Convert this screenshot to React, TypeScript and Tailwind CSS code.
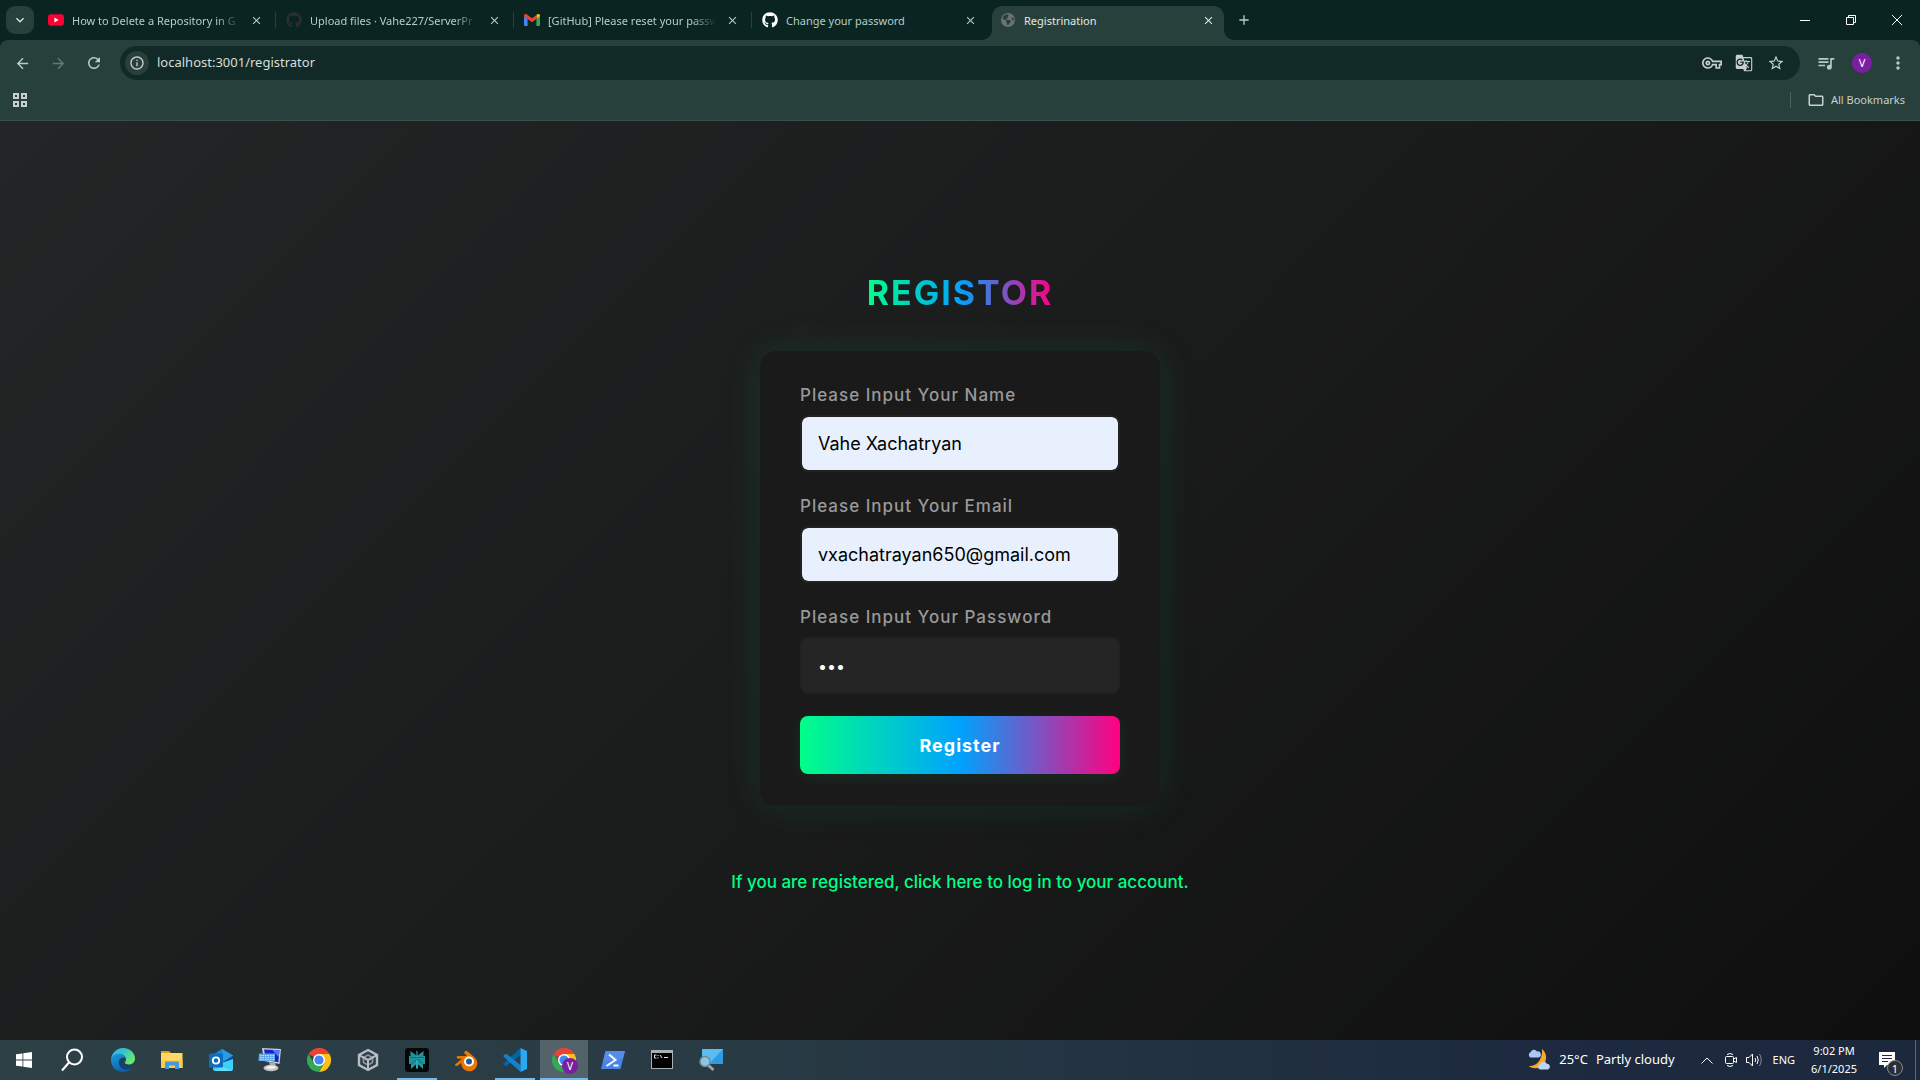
import React, { useState } from "react";
import { FaGithub } from "react-icons/fa";
import { FaEarthAmericas } from "react-icons/fa6";
import {
  MdArrowBack,
  MdArrowForward,
  MdClose,
  MdAdd,
  MdExpandMore,
  MdGTranslate,
  MdMoreVert,
  MdOutlineFolder,
  MdOutlineVpnKey,
  MdQueueMusic,
  MdRefresh,
  MdStarBorder,
  MdOutlineInfo,
} from "react-icons/md";

function YoutubeIcon() {
  return (
    <svg viewBox="0 0 16 16" className="size-4">
      <rect x="0" y="2.3" width="16" height="11.4" rx="3" fill="#ff0033" />
      <path d="M6.4 5.6v4.8L10.6 8z" fill="#fff" />
    </svg>
  );
}

function GmailIcon() {
  return (
    <svg viewBox="0 0 16 12" className="h-3 w-4">
      <path d="M0 1.8V11a1 1 0 0 0 1 1h2.6V4.6z" fill="#4285f4" />
      <path d="M16 1.8V11a1 1 0 0 1-1 1h-2.6V4.6z" fill="#34a853" />
      <path d="M12.4 1v3.8L16 2.2V1.6C16 .2 14.400-.5 13.300.3z" fill="#fbbc04" />
      <path d="M0 1.600v.6l3.600 2.700L8 8.200l4.400-3.300V1L8 4.300 2.700.3C1.600-.5 0 .2 0 1.600z" fill="#ea4335" />
    </svg>
  );
}

const tabs = [
  { title: "How to Delete a Repository in G", icon: <YoutubeIcon /> },
  { title: "Upload files · Vahe227/ServerPr", icon: <FaGithub className="size-4 text-[#2a2d31]" /> },
  { title: "[GitHub] Please reset your passw", icon: <GmailIcon /> },
  { title: "Change your password", icon: <FaGithub className="size-4 text-white" /> },
  { title: "Registrination", icon: <FaEarthAmericas className="size-[14px] text-[#6c7174]" />, active: true },
];

function Tab({ title, icon, active, divider }: { title: string; icon: React.ReactNode; active?: boolean; divider?: boolean }) {
  return (
    <div className="relative flex h-10 w-[238px] shrink items-end pl-[2px] pr-1">
      {active && (
        <>
          <svg viewBox="0 0 10 10" className="absolute bottom-0 -left-2 size-[10px] fill-[#28403b]"><path d="M10 0v10H0A10 10 0 0 0 10 0z" /></svg>
          <svg viewBox="0 0 10 10" className="absolute -right-[6px] bottom-0 size-[10px] fill-[#28403b]"><path d="M0 0v10h10A10 10 0 0 1 0 0z" /></svg>
        </>
      )}
      <div className={active ? "flex h-[34px] w-full items-center rounded-t-[10px] bg-[#28403b] pb-[6px] pl-2 pr-2" : "flex h-[34px] w-full items-center pb-[6px] pl-2 pr-2"}>
        <span className="flex size-4 shrink-0 items-center justify-center">{icon}</span>
        <span className={active ? "ml-2 min-w-0 flex-1 whitespace-nowrap pt-[2px] text-[11px] text-[#e3e8e6]" : divider ? "ml-2 min-w-0 flex-1 whitespace-nowrap pt-[2px] text-[11px] text-[#b4cec6] [mask-image:linear-gradient(to_right,black_86%,transparent)]" : "ml-2 min-w-0 flex-1 whitespace-nowrap pt-[2px] text-[11px] text-[#b4cec6]"}>{title}</span>
        <button aria-label={"Close " + title} className={active ? "ml-2 flex size-4 items-center justify-center text-[#e3e8e6]" : "ml-2 flex size-4 items-center justify-center text-[#b4cec6]"}>
          <MdClose className="size-[13px]" />
        </button>
      </div>
      {divider && <span className="absolute right-0 top-3 h-4 w-px bg-[#28403b]" />}
    </div>
  );
}

function AppsGridIcon() {
  return (
    <svg viewBox="0 0 16 16" className="size-4 fill-none stroke-current stroke-2"><path d="M2 2h4v4H2zM10 2h4v4h-4zM2 10h4v4H2zM10 10h4v4h-4z" /></svg>
  );
}

function BrowserChrome() {
  return (
    <header className="shrink-0 bg-[#0a2421]">
      <div className="flex h-10">
        <button aria-label="Search tabs" className="mx-[6px] mt-[6px] mr-1 flex size-7 shrink-0 items-center justify-center rounded-[9px] bg-[#28403b] text-[#d5e3de]">
          <MdExpandMore className="size-4" />
        </button>
        <nav aria-label="Tabs" className="flex min-w-0">
          {tabs.map((t, i) => (
            <Tab key={t.title} {...t} divider={i < 3} />
          ))}
        </nav>
        <button aria-label="New tab" className="ml-[2px] flex h-10 w-7 items-center justify-center text-[#b4cec6]">
          <MdAdd className="size-4" />
        </button>
        <div className="ml-auto flex text-white">
          <button aria-label="Minimize" className="flex h-10 w-[46px] items-center justify-center"><span className="h-px w-[10px] bg-white" /></button>
          <button aria-label="Restore" className="flex h-10 w-[46px] items-center justify-center">
            <svg viewBox="0 0 10 10" className="size-[10px] fill-none stroke-white"><path d="M.5 2.500h7v7h-7zM2.500 2.500v-2h7v7h-2" /></svg>
          </button>
          <button aria-label="Close window" className="flex h-10 w-[46px] items-center justify-center">
            <svg viewBox="0 0 10 10" className="size-[10px] fill-none stroke-white"><path d="M0 0l10 10M10 0L0 10" /></svg>
          </button>
        </div>
      </div>
      <div className="rounded-t-lg border-b border-[#3c4f4a] bg-[#28403b]">
        <div className="flex h-[46px] items-center pl-1 pr-1">
          <button aria-label="Back" className="flex size-9 items-center justify-center text-[#b4cec6]"><MdArrowBack className="size-[17px]" /></button>
          <button aria-label="Forward" className="flex size-9 items-center justify-center text-[#637a73]"><MdArrowForward className="size-[17px]" /></button>
          <button aria-label="Reload" className="flex size-9 items-center justify-center text-[#b4cec6]"><MdRefresh className="size-[18px]" /></button>
          <div className="ml-2 flex h-[34px] min-w-0 flex-1 items-center rounded-full bg-[#112a27] pl-[5px] pr-2 text-[#c7cfcc]">
            <button aria-label="View site information" className="flex size-6 shrink-0 items-center justify-center rounded-full bg-[#28403b]"><MdOutlineInfo className="size-4" /></button>
            <input aria-label="Address" defaultValue="localhost:3001/registrator" className="ml-2 min-w-0 flex-1 bg-transparent text-[13px] text-[#d5dfdc] outline-none" />
            <button aria-label="Passwords" className="flex size-8 items-center justify-center"><MdOutlineVpnKey className="size-5" /></button>
            <button aria-label="Translate" className="flex size-8 items-center justify-center"><MdGTranslate className="size-[18px]" /></button>
            <button aria-label="Bookmark this tab" className="flex size-8 items-center justify-center"><MdStarBorder className="size-[18px]" /></button>
          </div>
          <button aria-label="Media controls" className="ml-2 flex size-9 items-center justify-center text-[#b4cec6]"><MdQueueMusic className="size-5" /></button>
          <button aria-label="Profile" className="flex size-9 items-center justify-center"><span className="flex size-5 items-center justify-center rounded-full bg-[#7b1fa2] text-[11px] text-white">V</span></button>
          <button aria-label="Menu" className="flex size-9 items-center justify-center text-[#b4cec6]"><MdMoreVert className="size-5" /></button>
        </div>
        <div className="flex h-[34px] items-center pb-[6px] pl-3 pr-[15px] text-[#c7cfcc]">
          <button aria-label="Apps"><AppsGridIcon /></button>
          <span className="ml-auto h-4 w-px bg-[#48635b]" />
          <button className="ml-4 flex items-center gap-[6px] text-[11px]"><MdOutlineFolder className="size-[18px]" />All Bookmarks</button>
        </div>
      </div>
    </header>
  );
}

function Field({ id, label, type, value, filled }: { id: string; label: string; type: string; value: string; filled?: boolean }) {
  const [text, setText] = useState(value);
  return (
    <div className="mb-[22px]">
      <label htmlFor={id} className="mb-2 block text-[17px] font-medium leading-6 tracking-[1px] text-[#999]">{label}</label>
      <input
        id={id}
        type={type}
        value={text}
        onChange={(e) => setText(e.target.value)}
        className={filled
          ? "block h-[57px] w-full rounded-lg border-2 border-[#222] bg-[#e8f0fe] bg-clip-padding px-4 text-[18px] text-black outline-none"
          : "block h-[57px] w-full rounded-lg border-2 border-[#222] bg-[#252525] px-4 text-[16px] text-white outline-none"}
      />
    </div>
  );
}

function RegisterPage() {
  return (
    <main className="flex flex-1 flex-col items-center justify-center bg-[linear-gradient(135deg,#232526,#1a1b1b_50%,#0f0f0f)] font-['Inter',sans-serif]">
      <h1 className="bg-[linear-gradient(90deg,#00ff88,#00a2ff,#ff0080)] bg-clip-text text-[34px] font-bold leading-[52px] tracking-[2px] text-transparent">REGISTOR</h1>
      <form onSubmit={(e) => e.preventDefault()} className="mt-8 w-full max-w-[400px] rounded-2xl bg-[#1a1a1a] px-10 py-8 shadow-[0_0_40px_rgba(0,255,136,0.1)]">
        <Field id="name" label="Please Input Your Name" type="text" value="Vahe Xachatryan" filled />
        <Field id="email" label="Please Input Your Email" type="email" value="vxachatrayan650@gmail.com" filled />
        <Field id="password" label="Please Input Your Password" type="password" value="123" />
        <button type="submit" className="h-[58px] w-full rounded-lg bg-[linear-gradient(90deg,#00ff88,#00a2ff,#ff0080)] text-[18px] font-bold tracking-[1px] text-white shadow-[0_4px_15px_rgba(0,255,136,0.08)]">Register</button>
      </form>
      <a href="#login" className="mt-16 text-[17px] font-medium leading-6 text-[#00ff88]">If you are registered, click here to log in to your account.</a>
    </main>
  );
}

function ChromeLogo() {
  return (
    <svg viewBox="0 0 24 24" className="size-6">
      <path d="M12 12L1.600 6A12 12 0 0 1 22.400 6z" fill="#ea4335" />
      <path d="M12 0a12 12 0 0 1 10.400 6H12z" fill="#ea4335" />
      <path d="M22.400 6A12 12 0 0 1 12 24l5.200-9L12 6z" fill="#fbc116" />
      <path d="M1.600 6A12 12 0 0 0 12 24l5.200-9-10.400 0z" fill="#34a853" />
      <circle cx="12" cy="12" r="6" fill="#fff" />
      <circle cx="12" cy="12" r="4.600" fill="#4285f4" />
    </svg>
  );
}

function WindowsLogo() {
  return (
    <svg viewBox="0 0 16 16" className="size-4 fill-white"><path d="M0 2.300l6.500-.9v6.200H0zM7.300 1.300L16 0v7.600H7.300zM0 8.400h6.500v6.200L0 13.700zM7.300 8.400H16V16l-8.700-1.300z" /></svg>
  );
}

function SearchGlyph() {
  return (
    <svg viewBox="0 0 24 24" className="size-6 fill-none stroke-white stroke-2"><circle cx="14.500" cy="9" r="7.500" /><path d="M9 14.500L2 22.500" /></svg>
  );
}

function EdgeLogo() {
  return (
    <svg viewBox="0 0 24 24" className="size-6">
      <defs>
        <linearGradient id="edgeTop" x1="0" y1="0" x2="1" y2="0.500"><stop offset="0" stopColor="#2bb4ef" /><stop offset=".5" stopColor="#35c1d0" /><stop offset="1" stopColor="#66eb6e" /></linearGradient>
        <linearGradient id="edgeLow" x1="0" y1="0" x2="0.600" y2="1"><stop offset="0" stopColor="#1b9de2" /><stop offset="1" stopColor="#0c59a4" /></linearGradient>
      </defs>
      <path d="M0 12C.4 5 5.400 0 12 0c7.500 0 12 5.300 12 10.500 0 3.800-2.800 6-6 6-3 0-4.300-1-4.300-1.700 0-.6 1.300-1.200 1.300-3.300C15 8.500 12 6 8 6 3.500 6 .8 9 0 12z" fill="url(#edgeTop)" />
      <path d="M0 12C.8 8 4 5.800 8 5.800c3.500 0 6.500 1.900 7 4.700-1.200-1.300-5-1.500-6.500 1.500-2 4 1.500 9.500 7 9.500 3 0 5-1 6.500-2.500C20 22 16.400 24 12 24 5 24 0 18.500 0 12z" fill="url(#edgeLow)" />
      <path d="M8.500 12c-2 4 1.500 9 7 9 2.500 0 4.700-.8 6.500-2.200 0 0 .2-1-.6-.8C16 20 10.500 17 11 11.500 11 10 10.500 9.700 8.500 12z" fill="#123f80" />
    </svg>
  );
}

function ExplorerIcon() {
  return (
    <svg viewBox="0 0 24 24" className="size-6">
      <path d="M1 3h8l2 2H1z" fill="#e39a10" />
      <path d="M1 5h21.500v15H1z" fill="#fdd663" /><path d="M1 12h21.500v8H1z" fill="#fbc94b" />
      <path d="M5 21v-6.500a1 1 0 0 1 1-1h12a1 1 0 0 1 1 1V21h-4v-3.500H9V21z" fill="#3f9bdc" />
    </svg>
  );
}

function OutlookIcon() {
  return (
    <svg viewBox="0 0 24 24" className="size-6">
      <path d="M4 6.500L13 1l11 6.500V12H4z" fill="#1b86dc" />
      <path d="M24 7.500V13L13 19 9 14z" fill="#0f4a8e" />
      <path d="M13 1l11 6.500L14 14z" fill="#2a9be9" />
      <path d="M4 18l20-7v10a2 2 0 0 1-2 2H6a2 2 0 0 1-2-2z" fill="#3fd0f8" />
      <path d="M12 18.500L24 23H6z" fill="#62dffb" />
      <rect y="5.500" width="14" height="14" rx="1.200" fill="#0f6cbd" />
      <circle cx="7" cy="12.500" r="3.200" fill="none" stroke="#fff" strokeWidth="1.800" />
    </svg>
  );
}

function KeyboardPcIcon() {
  return (
    <svg viewBox="0 0 24 24" className="size-6">
      <path d="M4 0l19 1-1.500 15L6 13z" fill="#c9d0d6" /><path d="M6 1.500l15.500.7-1.200 12L8 12z" fill="#1522c4" /><path d="M14 1.800l7.500.4-.8 7z" fill="#5578ee" />
      <path d="M11 14l6 1 1 3-6 0z" fill="#a9adb1" /><ellipse cx="13" cy="20" rx="7.500" ry="3.300" fill="#c4c4c2" /><ellipse cx="13" cy="19.300" rx="5" ry="1.600" fill="#f0f0ec" />
      <path d="M1 5.500h16v7.500H.5z" fill="#5fa5e8" /><path d="M2 7.500h14M2 9.500h14M2 11.500h14" stroke="#d8eeff" strokeWidth=".8" strokeDasharray="1.500 1" />
    </svg>
  );
}

function UnityHubIcon() {
  return (
    <svg viewBox="0 0 24 24" className="size-6 fill-none stroke-[#b9bcc6]">
      <path d="M12 2L21 7v10l-9 5-9-5V7z" strokeWidth="2.400" />
      <path d="M12 7l4.500 2.500v5L12 17l-4.500-2.500v-5z" strokeWidth="1.800" stroke="#8d929e" />
      <path d="M12 12v10M12 12L3.500 7.300M12 12l8.500-4.700" strokeWidth="2" />
    </svg>
  );
}

function PerplexityIcon() {
  return (
    <svg viewBox="0 0 24 24" className="size-6">
      <rect width="24" height="24" rx="3" fill="#050808" />
      <path d="M12 8L5.500 3v5H4v8h2v5l5-4.500V20h2v-3.500l5 4.500v-5h2V8h-1.500V3z" fill="#20939c" />
      <path d="M11.500 3h1v18h-1z" fill="#35c3cc" />
      <path d="M12 11l-6 5M12 11l6 5M5 9.500h14" stroke="#107078" fill="none" strokeWidth="1" />
    </svg>
  );
}

function BlenderIcon() {
  return (
    <svg viewBox="0 0 24 24" className="size-6">
      <path d="M11 3.200c.9-.7 2-.2 2.700.4l7 5.800A8 8 0 1 1 7.300 14.800L3.500 17.700c-1.700 1.200-3.300-.5-1.900-1.800L8 10.700H4c-1.900 0-1.700-2.600.1-2.600h9L10.900 6c-1-.8-.8-2.100.1-2.800z" fill="#ea7600" />
      <circle cx="15" cy="13.500" r="5" fill="#fff" /><circle cx="15" cy="13.500" r="3" fill="#235899" />
    </svg>
  );
}

function VsCodeIcon() {
  return (
    <svg viewBox="0 0 24 24" className="size-6">
      <path d="M17.500 0v7L3 18.500 0 16z" fill="#0065a9" /><path d="M17.500 24v-7L3 5.500 0 8z" fill="#1382cd" />
      <path d="M17.500 0L24 3v18l-6.500 3z" fill="#29a9f2" />
    </svg>
  );
}

function PowerShellIcon() {
  return (
    <svg viewBox="0 0 24 24" className="size-6">
      <path d="M4.500 3H24l-4.500 18H0z" fill="#4a83e6" /><path d="M4.500 3H24l-2 8-20 2z" fill="#6295ed" opacity=".55" />
      <path d="M8 6.500l6.500 5.500L5.500 18M12.500 17.500h5" stroke="#fff" strokeWidth="2" fill="none" />
    </svg>
  );
}

function TerminalIcon() {
  return (
    <svg viewBox="0 0 24 24" className="size-6">
      <rect x="1" y="2" width="22" height="19" fill="#a9b0b2" /><path d="M2 5h20v15H2z" fill="#020202" />
      <path d="M6.500 7h-2v3h2M8 7v1M8 9.500v1M10 7l2 3M14 9.500h4" stroke="#e4e4e4" fill="none" />
    </svg>
  );
}

function RemoteIcon() {
  return (
    <svg viewBox="0 0 24 24" className="size-6">
      <path d="M3 1h21v15H3z" fill="#2e9be2" /><path d="M3 1h21L10 16H3z" fill="#5bbcf2" />
      <path d="M9 17l5.500 5" stroke="#9aa5ab" strokeWidth="3" /><circle cx="6" cy="13.500" r="5" fill="#8cc5e6" stroke="#708997" strokeWidth="1.500" />
    </svg>
  );
}

const apps = [
  { name: "Microsoft Edge", icon: <EdgeLogo /> },
  { name: "File Explorer", icon: <ExplorerIcon /> },
  { name: "Outlook", icon: <OutlookIcon /> },
  { name: "On-Screen Keyboard", icon: <KeyboardPcIcon /> },
  { name: "Google Chrome", icon: <ChromeLogo /> },
  { name: "Unity Hub", icon: <UnityHubIcon /> },
  { name: "Perplexity", icon: <PerplexityIcon />, running: true },
  { name: "Blender", icon: <BlenderIcon /> },
  { name: "Visual Studio Code", icon: <VsCodeIcon />, running: true },
  {
    name: "Google Chrome, profile V",
    icon: (
      <span className="relative">
        <ChromeLogo />
        <span className="absolute -bottom-[2px] -right-[2px] flex size-4 items-center justify-center rounded-full bg-[#7b1fa2] text-[10px] text-white">V</span>
      </span>
    ),
    active: true,
  },
  { name: "PowerShell", icon: <PowerShellIcon /> },
  { name: "Command Prompt", icon: <TerminalIcon /> },
  { name: "Remote Desktop", icon: <RemoteIcon /> },
];

function WeatherIcon() {
  return (
    <svg viewBox="0 0 24 22" className="h-[22px] w-6">
      <path d="M15 0a10.500 10.500 0 1 1-13.500 17C8 18 16 12 15 0z" fill="#f9a825" />
      <path d="M3.500 8.500a3 3 0 0 1 .3-5.500A3.500 3.500 0 0 1 10 2.500a3 3 0 0 1 1.500 6z" fill="#a9c8f5" />
      <path d="M13 20.500a2.700 2.700 0 0 1 .3-5.300 3.500 3.500 0 0 1 6.500-.5 3 3 0 0 1 1.200 5.800z" fill="#bcd3f8" />
    </svg>
  );
}

function Taskbar() {
  return (
    <footer className="flex h-10 shrink-0 items-center bg-[linear-gradient(90deg,#2d4045,#283a44_40%,#1d2a3f_80%,#1c283c)] text-white">
      <button aria-label="Start" className="flex h-10 w-12 items-center justify-center"><WindowsLogo /></button>
      <button aria-label="Search" className="mr-[3px] flex h-10 w-12 items-center justify-center"><SearchGlyph /></button>
      <nav aria-label="Applications" className="flex gap-px">
        {apps.map((a) => (
          <button key={a.name} aria-label={a.name} className={a.active ? "relative flex h-10 w-12 items-center justify-center bg-white/20" : "relative flex h-10 w-12 items-center justify-center"}>
            {a.icon}
            {a.running && <span className="absolute inset-x-1 bottom-0 h-[2px] bg-[#76b9ed]" />}
            {a.active && <span className="absolute inset-x-0 bottom-0 h-[2px] bg-[#76b9ed]" />}
          </button>
        ))}
      </nav>
      <button className="ml-auto flex h-10 items-center gap-2 text-[13px]">
        <WeatherIcon />
        <span>25°C</span>
        <span>Partly cloudy</span>
      </button>
      <button aria-label="Show hidden icons" className="ml-5 flex h-10 w-6 items-center justify-center">
        <svg viewBox="0 0 12 7" className="h-[7px] w-3 fill-none stroke-white"><path d="M.5 6.500L6 1l5.500 5.500" /></svg>
      </button>
      <button aria-label="Meet now" className="flex h-10 w-6 items-center justify-center">
        <svg viewBox="0 0 12 16" className="h-4 w-3 fill-none stroke-white"><rect x=".5" y="4.500" width="8" height="7" rx="1" /><path d="M8.500 7l3-1.500v5L8.500 9M2 2.500Q5 .5 8 2.500M2 13.500Q5 15.500 8 13.500" /></svg>
      </button>
      <button aria-label="Volume" className="flex h-10 w-6 items-center justify-center">
        <svg viewBox="0 0 17 14" className="h-[14px] w-[17px] fill-none stroke-white"><path d="M.5 4.500h2.500l3.500-3.500v12L3 9.500H.5zM9 5Q10.300 7 9 9M11 3Q13.500 7 11 11" /><path d="M13.500 1Q17 7 13.500 13" opacity=".45" /></svg>
      </button>
      <span className="ml-[6px] text-[11px]">ENG</span>
      <time dateTime="2025-06-01T21:02" className="ml-4 flex flex-col items-center text-[11px] leading-[18px]">
        <span>9:02 PM</span>
        <span>6/1/2025</span>
      </time>
      <button aria-label="1 new notification" className="relative ml-[22px] mr-3 flex h-10 w-6 items-center">
        <svg viewBox="0 0 16 16" className="size-4"><path d="M0 0h16v13H8l-3 3v-3H0z" fill="#fff" /><path d="M3 3.500h10M3 6.500h10M3 9.500h6" stroke="#1d2a3f" /></svg>
        <span className="absolute bottom-1 right-0 flex size-4 items-center justify-center rounded-full border border-[#888] bg-[#2b2f35] text-[11px] leading-none">1</span>
      </button>
      <span className="mr-1 h-10 w-px bg-[#5b6678]" />
    </footer>
  );
}

export default function App() {
  return (
    <div className="flex min-h-screen flex-col font-['Noto_Sans',sans-serif]">
      <BrowserChrome />
      <RegisterPage />
      <Taskbar />
    </div>
  );
}
